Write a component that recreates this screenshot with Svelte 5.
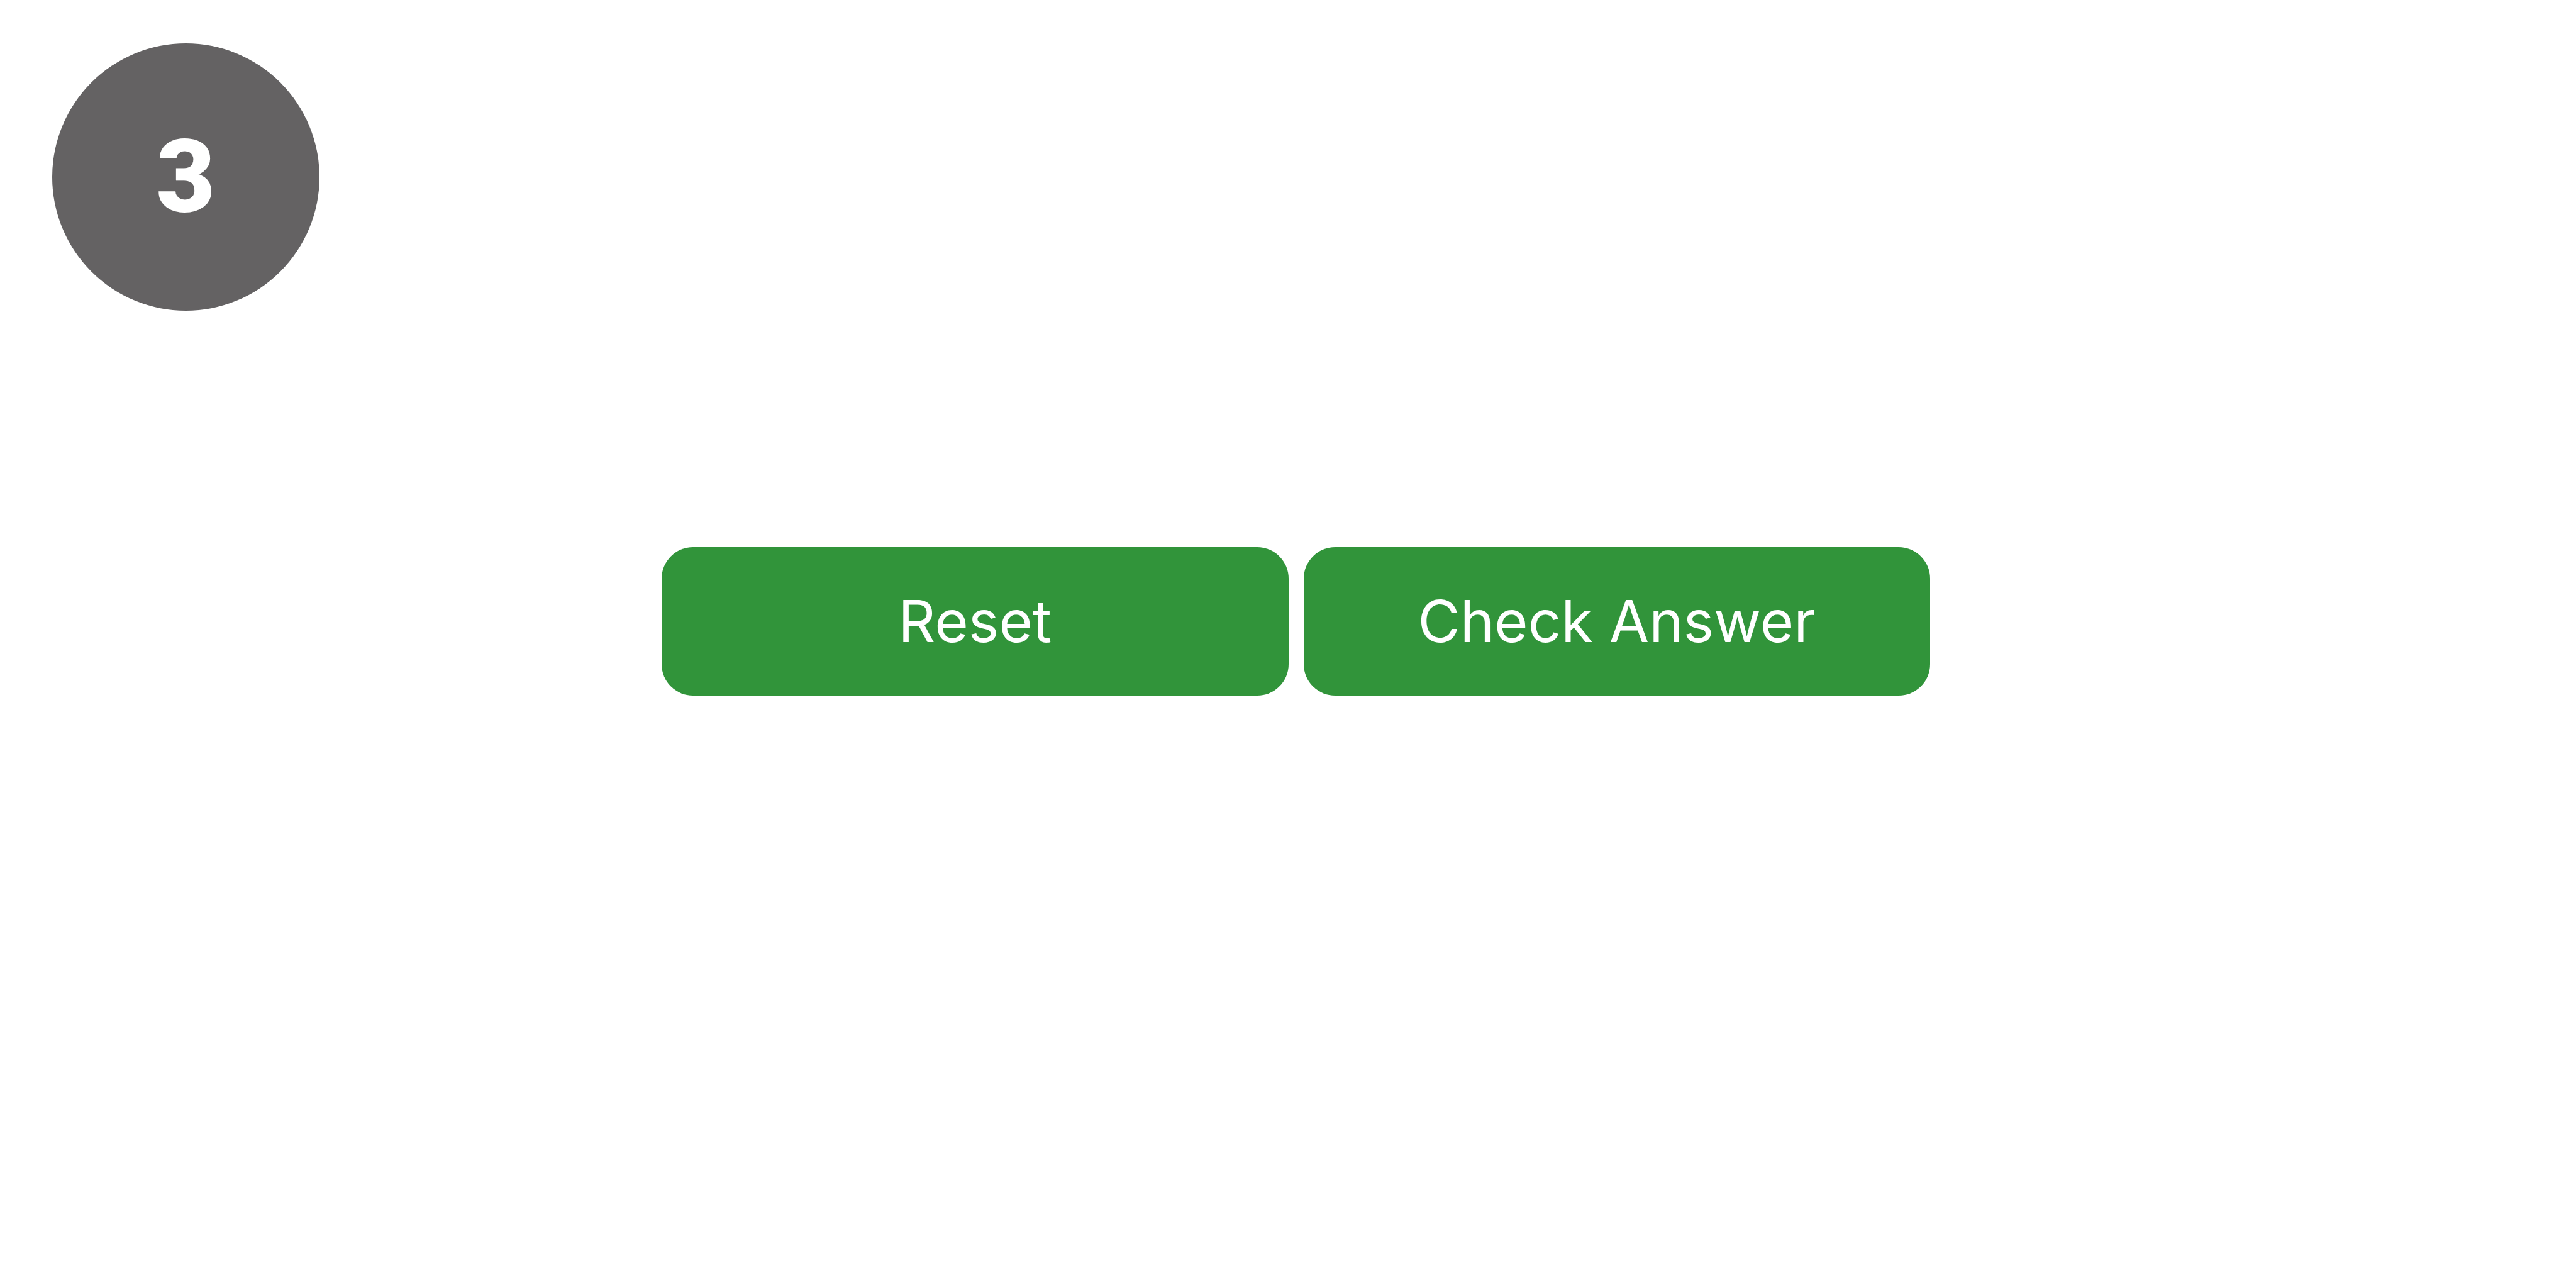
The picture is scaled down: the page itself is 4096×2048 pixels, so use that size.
<script>
  const step = 3;
  const actions = ['Reset', 'Check Answer'];
</script>

<main class="page">
  <header class="top">
    <span class="badge">{step}</span>
  </header>
  <section class="actions">
    <div class="row">
      {#each actions as label}
        <button type="button" class="action">{label}</button>
      {/each}
    </div>
  </section>
</main>

<style>
  :global(body) {
    background: #fff;
  }

  .page {
    display: flex;
    flex-direction: column;
    gap: 376px;
    min-height: 100vh;
    box-sizing: border-box;
    padding-top: 69px;
  }

  .top {
    display: flex;
    padding: 0 83px;
  }

  .badge {
    display: flex;
    align-items: center;
    justify-content: center;
    width: 425px;
    height: 425px;
    box-sizing: border-box;
    padding-bottom: 2px;
    border-radius: 50%;
    background: #646263;
    color: #fff;
    font-family: Roboto, sans-serif;
    font-weight: 900;
    font-size: 162px;
    line-height: 192px;
  }

  .actions {
    display: flex;
    justify-content: center;
    padding-left: 25px;
  }

  .row {
    display: grid;
    grid-template-columns: 1fr 1fr;
    gap: 24px;
    width: 100%;
    max-width: 2017px;
  }

  .action {
    padding: 60px 24px;
    border: 0;
    border-radius: 50px;
    background: #31943a;
    color: #fff;
    font-family: Inter, sans-serif;
    font-size: 92px;
    font-weight: 400;
    line-height: 116px;
    cursor: pointer;
  }
</style>
